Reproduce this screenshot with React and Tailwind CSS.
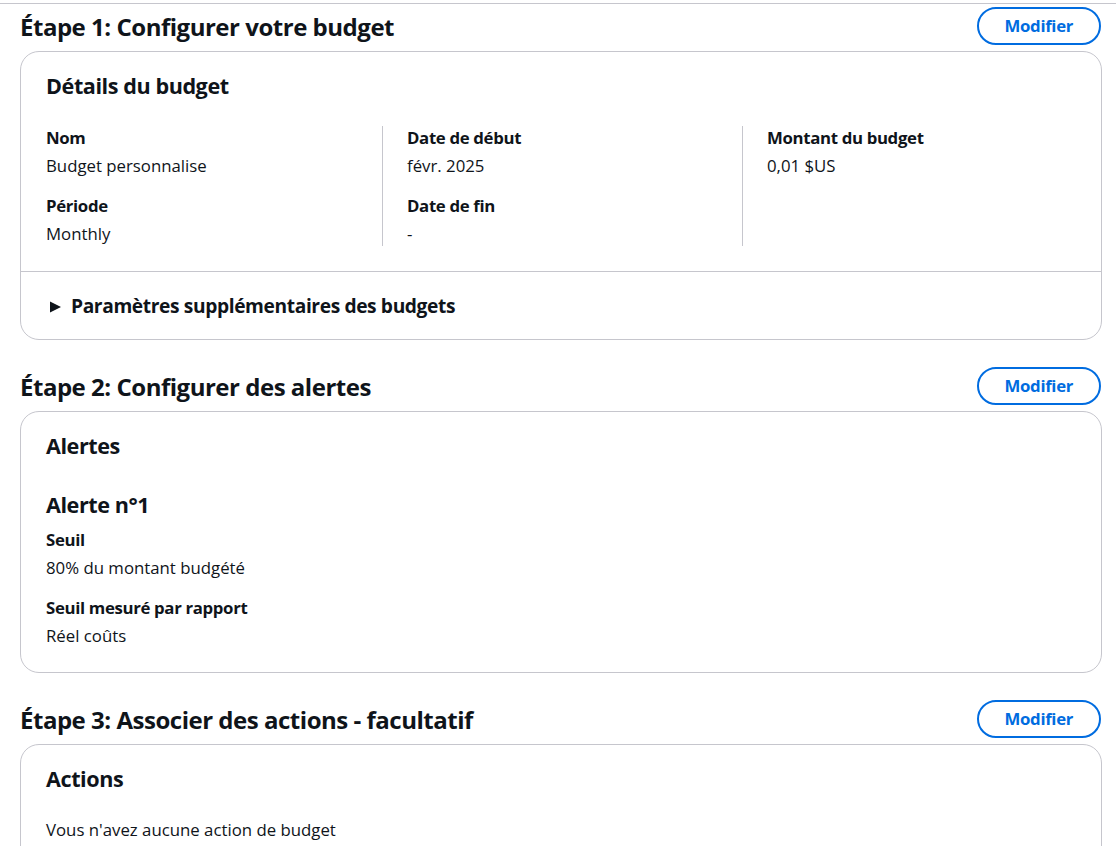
const font = { fontFamily: '"Open Sans", "Noto Sans", Arial, sans-serif' };

function StepHeader({ title }) {
  return (
    <div className="flex h-[38px] items-center justify-between">
      <h2 className="text-[24px] font-bold leading-[29px] tracking-[-0.02em] text-[#0f141a]">
        {title}
      </h2>
      <button className="mr-px h-[38px] rounded-full border-2 border-[#006ce0] px-[26px] text-[16.8px] font-bold leading-[24px] tracking-[-0.02em] text-[#006ce0]">
        Modifier
      </button>
    </div>
  );
}

function Card({ title, children }) {
  return (
    <div className="mt-[6px] rounded-[19px] border border-[#c6c6cd] bg-white">
      <h3 className="px-[25px] pt-[21px] text-[21.6px] font-bold leading-[26px] tracking-[-0.02em]">
        {title}
      </h3>
      {children}
    </div>
  );
}

function Field({ label, value, className = "" }) {
  return (
    <div className={className}>
      <div className="text-[16.8px] font-bold leading-[24px] tracking-[-0.02em]">{label}</div>
      <div className="mt-[4px] text-[16.8px] leading-[24px]">{value}</div>
    </div>
  );
}

export default function App() {
  return (
    <div className="min-h-screen bg-white pt-[3px] text-[#0f141a]" style={font}>
      <div className="border-t border-[#c6c6cd] pl-[20px] pr-[14px] pt-[3px]">
        {/* Step 1 */}
        <section>
          <StepHeader title="Étape 1: Configurer votre budget" />
          <Card title="Détails du budget">
            <div className="ml-px mt-[27px] grid grid-cols-[360px_360px_360px]">
              <div className="pl-[24px]">
                <Field label="Nom" value="Budget personnalise" />
                <Field className="mt-[16px]" label="Période" value="Monthly" />
              </div>
              <div className="border-l border-[#c6c6cd] pl-[24px]">
                <Field label="Date de début" value="févr. 2025" />
                <Field className="mt-[16px]" label="Date de fin" value="-" />
              </div>
              <div className="border-l border-[#c6c6cd] pl-[24px]">
                <Field label="Montant du budget" value="0,01 $US" />
              </div>
            </div>
            <div className="mt-[25px] border-t border-[#c6c6cd]" />
            <div className="flex items-center px-[25px] pb-[21px] pt-[22px]">
              <svg viewBox="0 0 11 12" className="ml-[4px] mt-[2px] h-[12px] w-[11px] shrink-0">
                <path d="M0 0.5 L11 6 L0 11.5 Z" fill="#0f141a" />
              </svg>
              <span className="ml-[10px] text-[19.2px] font-bold leading-[24px] tracking-[-0.02em]">
                Paramètres supplémentaires des budgets
              </span>
            </div>
          </Card>
        </section>

        {/* Step 2 */}
        <section className="mt-[27px]">
          <StepHeader title="Étape 2: Configurer des alertes" />
          <Card title="Alertes">
            <div className="px-[25px] pb-[24px]">
              <h4 className="mt-[33px] text-[21.6px] font-bold leading-[26px] tracking-[-0.02em]">
                Alerte n°1
              </h4>
              <Field className="mt-[10px]" label="Seuil" value="80% du montant budgété" />
              <Field className="mt-[16px]" label="Seuil mesuré par rapport" value="Réel coûts" />
            </div>
          </Card>
        </section>

        {/* Step 3 */}
        <section className="mt-[27px]">
          <StepHeader title="Étape 3: Associer des actions - facultatif" />
          <Card title="Actions">
            <div className="px-[25px] pb-[26px]">
              <p className="mt-[26px] text-[16.8px] leading-[24px]">
                Vous n'avez aucune action de budget
              </p>
            </div>
          </Card>
        </section>
      </div>
    </div>
  );
}
